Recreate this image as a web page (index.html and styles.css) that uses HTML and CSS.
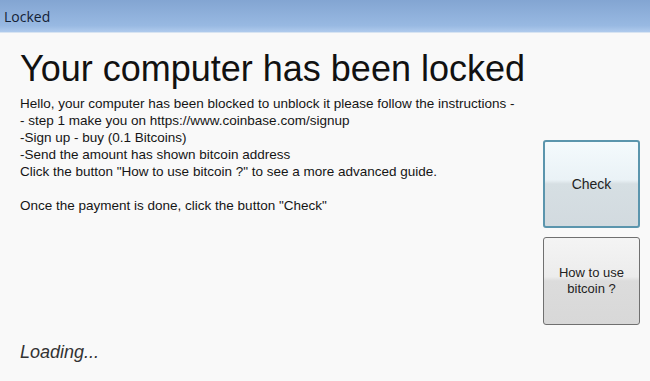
FILE: index.html
```html
<!DOCTYPE html>
<html>
<head>
<meta charset="utf-8">
<link rel="stylesheet" href="styles.css">
</head>
<body>
<div class="window">
  <div class="titlebar"><span class="title">Locked</span></div>
  <div class="content">
    <div class="main">
      <h1 class="heading">Your computer has been locked</h1>
      <div class="message">
        <p>Hello, your computer has been blocked to unblock it please follow the instructions -</p>
        <p>- step 1 make you on https://www.coinbase.com/signup</p>
        <p>-Sign up - buy (0.1 Bitcoins)</p>
        <p>-Send the amount has shown bitcoin address</p>
        <p>Click the button "How to use bitcoin ?" to see a more advanced guide.</p>
        <p class="gap">Once the payment is done, click the button "Check"</p>
      </div>
      <div class="loading">Loading...</div>
    </div>
    <div class="side">
      <button class="btn focused">Check</button>
      <button class="btn">How to use<br>bitcoin ?</button>
    </div>
  </div>
</div>
</body>
</html>
```
FILE: styles.css
```css
html, body {
  margin: 0;
  padding: 0;
}
body {
  width: 650px;
  height: 381px;
  overflow: hidden;
  background: #f9f9f9;
  font-family: "Liberation Sans", Arial, sans-serif;
}
.window {
  display: flex;
  flex-direction: column;
  height: 381px;
}
.titlebar {
  height: 33px;
  flex: none;
  background: linear-gradient(#83a5d2, #98b9e2 80%, #b0cbed);
  border-bottom: 1px solid #d8e4f2;
  display: flex;
  align-items: center;
  padding-left: 4px;
  box-sizing: border-box;
}
.title {
  font-family: "Open Sans", "DejaVu Sans", sans-serif;
  font-size: 14px;
  color: #142236;
}
.content {
  flex: 1;
  display: flex;
  padding: 0 10px 0 20px;
}
.main {
  flex: 1;
  display: flex;
  flex-direction: column;
  min-width: 0;
}
.heading {
  margin: 14px 0 0 0;
  font-weight: normal;
  font-size: 36px;
  line-height: 44px;
  color: #111;
  white-space: nowrap;
}
.message {
  margin-top: 4px;
  font-size: 13.5px;
  line-height: 17px;
  color: #151515;
  white-space: nowrap;
}
.message p {
  margin: 0;
}
.message .gap {
  margin-top: 17px;
}
.loading {
  margin-top: 128px;
  font-style: italic;
  font-size: 18px;
  line-height: 20px;
  color: #333;
}
.side {
  width: 97px;
  display: flex;
  flex-direction: column;
  gap: 9px;
  padding-top: 107px;
}
.btn {
  width: 97px;
  height: 88px;
  box-sizing: border-box;
  border: 1px solid #707070;
  border-radius: 3px;
  background: linear-gradient(#f4f4f4, #ececec 45%, #dcdcdc 50%, #d8d8d8);
  font-family: "Liberation Sans", Arial, sans-serif;
  font-size: 13px;
  color: #222;
  padding: 0;
  line-height: 16px;
}
.btn.focused {
  border: 2px solid #5b95ad;
  background: linear-gradient(#f4fafd, #eaf2f6 45%, #d6dfe3 50%, #d2dadf);
  font-size: 14px;
}
```
